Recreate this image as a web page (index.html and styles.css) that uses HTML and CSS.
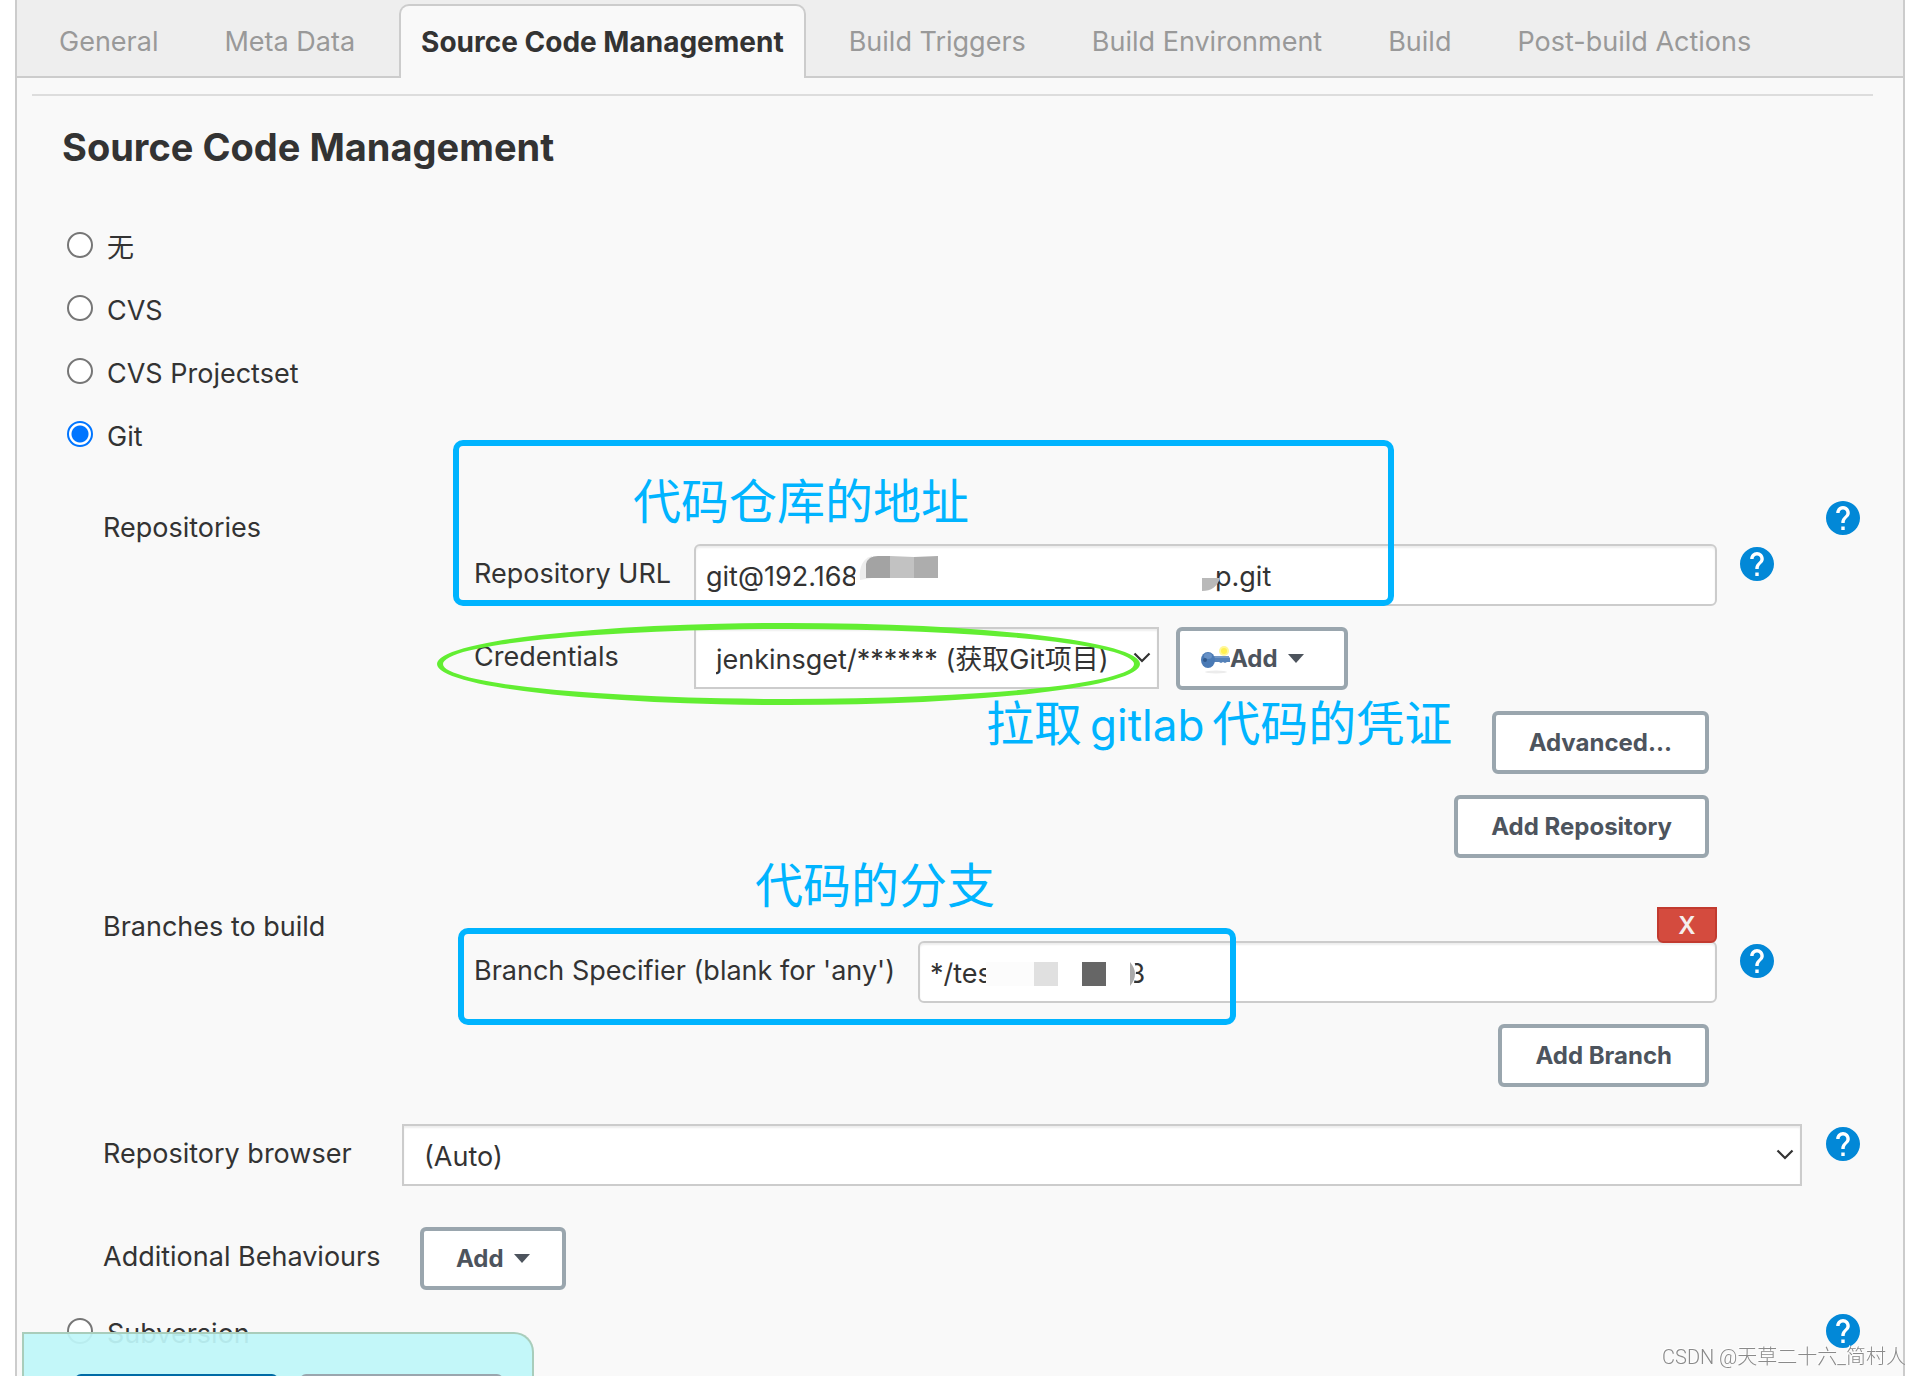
FILE: index.html
```html
<!DOCTYPE html>
<html lang="zh-CN">
<head>
<meta charset="utf-8">
<meta name="viewport" content="width=device-width, initial-scale=1">
<title>Source Code Management</title>
<link rel="stylesheet" href="styles.css">
</head>
<body>
<svg class="sprite" aria-hidden="true">
  <symbol id="icon-help" viewBox="2 2 20 20">
    <circle cx="12" cy="12" r="9" fill="#fff"/>
    <path fill="#0288d7" d="M12 2C6.48 2 2 6.48 2 12s4.48 10 10 10 10-4.48 10-10S17.52 2 12 2zm1 17h-2v-2h2v2zm2.070-7.750l-.9.92C13.450 12.900 13 13.500 13 15h-2v-.5c0-1.100.450-2.100 1.170-2.830l1.240-1.260c.370-.360.590-.860.590-1.410 0-1.100-.9-2-2-2s-2 .9-2 2H8c0-2.210 1.790-4 4-4s4 1.790 4 4c0 .880-.360 1.680-.930 2.250z"/>
  </symbol>
  <symbol id="icon-chevron" viewBox="0 0 18 12">
    <path d="M1.500 1.500 9 9l7.500-7.500" fill="none" stroke="#333" stroke-width="2.200"/>
  </symbol>
  <symbol id="icon-caret" viewBox="0 0 16 9">
    <path d="M0 0h16L8 9z" fill="#4d545d"/>
  </symbol>
</svg>

<main class="panel">
  <nav class="tabs">
    <a class="tab" href="#general">General</a>
    <a class="tab" href="#meta">Meta Data</a>
    <a class="tab active" href="#scm">Source Code Management</a>
    <a class="tab" href="#triggers">Build Triggers</a>
    <a class="tab" href="#environment">Build Environment</a>
    <a class="tab" href="#build">Build</a>
    <a class="tab" href="#post">Post-build Actions</a>
  </nav>

  <form class="scm" id="scm">
    <h2>Source Code Management</h2>

    <div class="choice"><input type="radio" name="scm" id="scm-none"><label for="scm-none">无</label></div>
    <div class="choice"><input type="radio" name="scm" id="scm-cvs"><label for="scm-cvs">CVS</label></div>
    <div class="choice"><input type="radio" name="scm" id="scm-cvsp"><label for="scm-cvsp">CVS Projectset</label></div>
    <div class="choice"><input type="radio" name="scm" id="scm-git" checked><label for="scm-git">Git</label></div>

    <section class="block repositories">
      <div class="name">Repositories</div>
      <div class="nested">
        <div class="line">
          <label for="url">Repository URL</label>
          <div class="field">
            <input type="text" id="url" value="git@192.168                                               p.git">
            <svg class="redact" width="380" height="50" aria-hidden="true">
              <path d="M5 46V24Q9 4 28 4H368V15Q366 33 355 38V46H5z" fill="#fff"/>
              <path d="M10 30Q8 10 22 6V28z" fill="#ededed"/>
              <path d="M16 28V14Q18 6 28 6H40V28z" fill="#a3a3a3"/>
              <path d="M40 6L64 7V28H40z" fill="#c2c2c2"/>
              <path d="M64 7L88 6V28H64z" fill="#adadad"/>
              <path d="M352 28H370Q366 41 352 41z" fill="#b9b9b9"/>
            </svg>
          </div>
          <a class="help" href="#help-url" aria-label="Help"><svg><use href="#icon-help"/></svg></a>
        </div>
        <div class="line credentials">
          <label for="cred">Credentials</label>
          <div class="picker">
            <select id="cred"><option>jenkinsget/****** (获取Git项目)</option></select>
            <svg class="chevron"><use href="#icon-chevron"/></svg>
          </div>
          <button type="button" class="btn with-key">
            <svg class="key" viewBox="0 0 30 32" aria-hidden="true">
              <ellipse cx="16" cy="29" rx="11" ry="1.500" fill="#ececec"/>
              <circle cx="24" cy="8" r="5" fill="#fff799"/>
              <circle cx="24" cy="8" r="3" fill="#fff04f"/>
              <path d="M12 13h16l2 2v4h-3l-2 1-2-1-2 1-2-1h-7z" fill="#5481b8"/>
              <path d="M13 14h16" stroke="#7398c6" stroke-width="2"/>
              <ellipse cx="8" cy="17" rx="7" ry="8" fill="#4a7ab5"/>
              <ellipse cx="8" cy="13" rx="4" ry="3" fill="#6791c6"/>
              <circle cx="5" cy="17" r="2" fill="#31598c"/>
            </svg>Add<svg class="caret"><use href="#icon-caret"/></svg>
          </button>
        </div>
        <button type="button" class="btn end">Advanced...</button>
        <button type="button" class="btn end">Add Repository</button>
      </div>
      <a class="help" href="#help-repos" aria-label="Help"><svg><use href="#icon-help"/></svg></a>
    </section>

    <section class="block branches">
      <div class="name">Branches to build</div>
      <div class="nested">
        <button type="button" class="remove">X</button>
        <div class="line wide-label">
          <label for="branch">Branch Specifier (blank for 'any')</label>
          <div class="field">
            <input type="text" id="branch" value="*/tes                  8">
            <svg class="redact branch-redact" width="160" height="40" aria-hidden="true">
              <path d="M0 2H146Q154 16 146 32H0z" fill="#fff"/>
              <path d="M0 7H48V31H0z" fill="#fcfcfc"/>
              <path d="M48 7H72V31H48z" fill="#e0e0e0"/>
              <path d="M96 7H120V31H96z" fill="#666"/>
              <path d="M144 7Q154 19 144 31z" fill="#aaa"/>
            </svg>
          </div>
          <a class="help" href="#help-branch" aria-label="Help"><svg><use href="#icon-help"/></svg></a>
        </div>
        <button type="button" class="btn end">Add Branch</button>
      </div>
    </section>

    <section class="block browser">
      <label class="name" for="browser">Repository browser</label>
      <div class="picker">
        <select id="browser"><option>(Auto)</option></select>
        <svg class="chevron"><use href="#icon-chevron"/></svg>
      </div>
      <a class="help" href="#help-browser" aria-label="Help"><svg><use href="#icon-help"/></svg></a>
    </section>

    <section class="block behaviours">
      <div class="name">Additional Behaviours</div>
      <button type="button" class="btn">Add<svg class="caret"><use href="#icon-caret"/></svg></button>
    </section>

    <div class="choice last"><input type="radio" name="scm" id="scm-svn"><label for="scm-svn">Subversion</label>
      <a class="help" href="#help-svn" aria-label="Help"><svg><use href="#icon-help"/></svg></a>
    </div>
  </form>

  <div class="mark box url-box"></div>
  <div class="mark oval"></div>
  <div class="mark box branch-box"></div>
  <p class="mark note url-note">代码仓库的地址</p>
  <p class="mark note cred-note">拉取<span>gitlab</span>代码的凭证</p>
  <p class="mark note branch-note">代码的分支</p>
</main>

<div class="actions">
  <button type="button" class="save" aria-label="Save"></button>
  <button type="button" class="apply" aria-label="Apply"></button>
</div>
<div class="watermark">CSDN @天草二十六_简村人</div>
</body>
</html>
```

FILE: styles.css
```css
* { box-sizing: border-box; }

body {
  margin: 0;
  background: #fff;
  color: #333;
  font: 27px/40px Inter, "Noto Sans CJK SC", sans-serif;
}

button, input, select { margin: 0; font: inherit; color: inherit; }
a { text-decoration: none; }
.sprite { display: none; }

.panel {
  position: relative;
  min-height: 100vh;
  margin: 0 17px 0 15px;
  border: solid #ccc;
  border-width: 0 2px;
  background: #f9f9f9;
}

/* Tabs */
.tabs {
  display: flex;
  height: 78px;
  padding: 4px 0 0 9px;
  border-bottom: 2px solid #ccc;
  background: #eee;
}
.tab { padding: 18px 33px 0; color: #999; white-space: nowrap; }
.tab.active {
  height: 74px;
  margin: 0 10px 0 11px;
  padding: 16px 20px 0;
  border: 2px solid #ccc;
  border-bottom: 0;
  border-radius: 10px 10px 0 0;
  background: #f9f9f9;
  color: #333;
  font-size: 28px;
  font-weight: 700;
}

/* Form */
.scm { padding: 0 43px 0 50px; }
.scm::before {
  content: "";
  display: block;
  height: 2px;
  margin: 16px -13px 0 -35px;
  background: #ddd;
}
h2 { margin: 27px 0 42px -5px; font-size: 38px; line-height: 48px; font-weight: 700; }

.choice { display: flex; align-items: center; gap: 14px; height: 63px; }
.choice label { padding-top: 7px; }
.choice .help { margin-left: auto; }
input[type="radio"] {
  appearance: none;
  width: 26px;
  height: 26px;
  border: 2px solid #767676;
  border-radius: 50%;
  background: #fff;
}
input[type="radio"]:checked {
  border-color: #0075ff;
  background: radial-gradient(circle, #0075ff 8px, #fff 9px);
}

.block {
  display: grid;
  grid-template-columns: 299px 1fr 34px;
  align-items: start;
  padding-left: 36px;
}
.block > .nested, .block > .picker { margin-right: 24px; }
.name { padding-top: 7px; }
.help { display: block; flex: none; width: 34px; height: 34px; }
.help svg { display: block; width: 34px; height: 34px; }

.repositories { margin-top: 36px; }
.branches { margin-top: 49px; }
.browser { margin-top: 37px; }
.browser .name, .behaviours .name { padding-top: 10px; }
.browser > .help { margin-top: 3px; }
.behaviours { margin: 41px 0 9px; }
.behaviours .btn { justify-self: start; margin-left: 18px; }

.nested {
  display: flex;
  flex-direction: column;
  gap: 21px;
  padding: 0 28px 0 72px;
}
.repositories .nested { padding-top: 43px; }
.branches .name { padding-top: 0; }

.line { display: grid; grid-template-columns: 220px 1fr 34px; align-items: start; }
.line.wide-label { grid-template-columns: 444px 1fr 34px; }
.line > label { padding-top: 10px; }
.line > .help { margin-top: 3px; }
.line.credentials { grid-template-columns: 220px 465px auto; justify-content: start; }
.credentials .btn { margin-left: 17px; }

.field { position: relative; margin-right: 23px; }
.field input {
  display: block;
  width: 100%;
  height: 62px;
  padding: 2px 10px 0;
  border: 2px solid #ccc;
  border-radius: 6px;
  background: #fff;
  box-shadow: inset 0 2px 2px #eee;
}
.redact { position: absolute; left: 156px; top: 6px; }
.branch-redact { left: 68px; top: 14px; }

.picker { position: relative; }
.picker select {
  appearance: none;
  display: block;
  width: 100%;
  height: 62px;
  padding: 4px 20px 0;
  border: 2px solid #ccc;
  border-radius: 0;
  background: #fff;
  box-shadow: inset 0 2px 2px #eee;
}
.chevron { position: absolute; right: 8px; top: 25px; width: 18px; height: 12px; }

.btn {
  display: flex;
  align-items: center;
  height: 63px;
  padding: 0 32px;
  border: 4px solid #9aa6ae;
  border-radius: 6px;
  background: #fff;
  color: #4d545d;
  font-size: 24px;
  font-weight: 700;
  white-space: nowrap;
}
.btn.end { align-self: flex-end; margin-right: 65px; padding: 0 33px; }
.btn.with-key { padding: 0 40px 0 20px; }
.key { width: 30px; height: 32px; }
.caret { width: 16px; height: 9px; margin-left: 10px; }

.remove {
  position: relative;
  z-index: 1;
  align-self: flex-end;
  width: 60px;
  height: 36px;
  margin: 0 57px -23px 0;
  padding: 0;
  border: 2px solid #c23a2f;
  border-radius: 0 0 6px 6px;
  background: #d44b3e;
  color: #f5eeee;
  font-size: 24px;
  line-height: 34px;
  font-weight: 600;
}

/* Hand-drawn notes over the form */
.mark { position: absolute; margin: 0; pointer-events: none; }
.box { border: 6px solid #00b4ff; border-radius: 10px; }
.url-box { left: 436px; top: 440px; width: 941px; height: 166px; }
.branch-box { left: 441px; top: 928px; width: 778px; height: 97px; }
.oval {
  left: 420px;
  top: 623px;
  width: 703px;
  height: 82px;
  border: 6px solid #62ee32;
  border-radius: 50%;
}
.note { color: #00b4ff; font-size: 48px; line-height: 64px; white-space: nowrap; }
.note span { margin: 0 8px; font-size: 44px; }
.url-note { left: 616px; top: 470px; }
.cred-note { left: 969px; top: 692px; }
.branch-note { left: 738px; top: 854px; }

.actions {
  position: fixed;
  left: 22px;
  bottom: 0;
  display: flex;
  gap: 22px;
  width: 512px;
  height: 44px;
  padding: 40px 31px 0 51px;
  overflow: hidden;
  border: 2px solid #a9cdbb;
  border-bottom: 0;
  border-radius: 0 20px 0 0;
  background: rgba(190, 246, 249, .93);
}
.actions button {
  flex: none;
  width: 203px;
  height: 60px;
  border: 0;
  border-radius: 6px;
}
.save { background: #006ba6; }
.apply { background: #9aa6ae; }

.watermark {
  position: fixed;
  right: 16px;
  bottom: 5px;
  color: #8a8a8a;
  font: 300 20px/28px Roboto, "Noto Sans CJK SC", sans-serif;
  text-shadow: -1px -1px 0 #fff;
}
```
